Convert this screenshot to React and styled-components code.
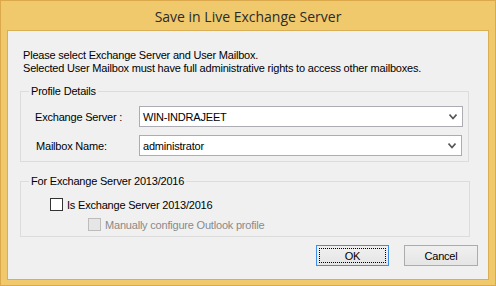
import React from 'react';
import styled, { createGlobalStyle } from 'styled-components';

const GlobalStyle = createGlobalStyle`
  body {
    margin: 0;
    background: #ffffff;
  }
`;

const Window = styled.div`
  width: 496px;
  height: 286px;
  box-sizing: border-box;
  background: #f0c96c;
  border: 1px solid #dba94c;
  display: flex;
  flex-direction: column;
`;

const TitleBar = styled.div`
  height: 29px;
  display: flex;
  align-items: center;
  justify-content: center;
  font-family: "Open Sans", "Noto Sans", sans-serif;
  font-size: 14px;
  color: #2b2b2b;
  padding-top: 1px;
  box-sizing: border-box;
`;

const Client = styled.div`
  margin: 0 6px 5px;
  height: 250px;
  box-sizing: border-box;
  border: 1px solid #d9ae55;
  background: #f0f0f0;
  padding: 18px 0 0 12px;
  display: flex;
  flex-direction: column;
  font-family: "Liberation Sans", Arial, sans-serif;
  font-size: 11px;
  letter-spacing: -0.2px;
  color: #000;
`;

const Intro = styled.div`
  margin-left: 3px;
  line-height: 13px;
`;

const GroupBox = styled.div`
  position: relative;
  width: ${p => p.$width}px;
  margin-top: ${p => p.$top}px;
  box-sizing: border-box;
  border: 1px solid #dcdcdc;
  padding: ${p => p.$pad};
  display: flex;
  flex-direction: column;
  gap: ${p => p.$gap}px;
`;

const Legend = styled.span`
  position: absolute;
  left: 8px;
  top: -7px;
  padding: 0 2px;
  background: #f0f0f0;
  line-height: 13px;
`;

const FieldRow = styled.div`
  display: flex;
  align-items: center;
  height: 21px;
`;

const Label = styled.div`
  width: ${p => p.$width}px;
  padding-left: ${p => p.$indent}px;
  box-sizing: border-box;
`;

const Combo = styled.div`
  width: ${p => p.$width}px;
  height: 21px;
  box-sizing: border-box;
  border: 1px solid #abadb3;
  background: #fff;
  display: flex;
  align-items: center;
  justify-content: space-between;
  padding: 0 5px 0 3px;
`;

const CheckRow = styled.div`
  display: flex;
  align-items: center;
  height: 13px;
  margin-left: ${p => p.$indent}px;
  color: ${p => (p.$disabled ? '#8a8a8a' : '#000')};
`;

const Box = styled.span`
  width: 13px;
  height: 13px;
  box-sizing: border-box;
  border: 1px solid ${p => (p.$disabled ? '#bcbcbc' : '#333')};
  background: ${p => (p.$disabled ? '#e6e6e6' : '#fff')};
  margin-right: 4px;
`;

const ButtonBar = styled.div`
  display: flex;
  justify-content: flex-end;
  gap: 15px;
  margin-top: 8px;
  padding-right: 10px;
`;

const Button = styled.div`
  width: ${p => p.$width}px;
  height: 21px;
  box-sizing: border-box;
  border: 1px solid ${p => (p.$default ? '#3c8fe6' : '#acacac')};
  background: linear-gradient(#f0f0f0, #e5e5e5);
  display: flex;
  align-items: center;
  justify-content: center;
  padding: 2px;
`;

const Focus = styled.div`
  flex: 1;
  align-self: stretch;
  border: 1px dotted #000;
  display: flex;
  align-items: center;
  justify-content: center;
`;

function Chevron() {
  return (
    <svg width="8" height="6" viewBox="0 0 8 6">
      <path d="M0.5 0.5 L4 4.5 L7.5 0.5" fill="none" stroke="#555" strokeWidth="1.6" />
    </svg>
  );
}

export default function App() {
  return (
    <>
      <GlobalStyle />
      <Window>
        <TitleBar>Save in Live Exchange Server</TitleBar>
        <Client>
          <Intro>
            Please select Exchange Server and User Mailbox.
            <br />
            Selected User Mailbox must have full administrative rights to access other mailboxes.
          </Intro>

          <GroupBox $width={449} $top={16} $pad="14px 0 5px 0" $gap={8}>
            <Legend>Profile Details</Legend>
            <FieldRow>
              <Label $width={118} $indent={14}>Exchange Server :</Label>
              <Combo $width={324}>
                WIN-INDRAJEET
                <Chevron />
              </Combo>
            </FieldRow>
            <FieldRow>
              <Label $width={118} $indent={15}>Mailbox Name:</Label>
              <Combo $width={323}>
                administrator
                <Chevron />
              </Combo>
            </FieldRow>
          </GroupBox>

          <GroupBox $width={450} $top={19} $pad="16px 0 5px 0" $gap={7}>
            <Legend>For Exchange Server 2013/2016</Legend>
            <CheckRow $indent={29}>
              <Box />
              Is Exchange Server 2013/2016
            </CheckRow>
            <CheckRow $indent={67} $disabled>
              <Box $disabled />
              Manually configure Outlook profile
            </CheckRow>
          </GroupBox>

          <ButtonBar>
            <Button $width={73} $default>
              <Focus>OK</Focus>
            </Button>
            <Button $width={74}>Cancel</Button>
          </ButtonBar>
        </Client>
      </Window>
    </>
  );
}
